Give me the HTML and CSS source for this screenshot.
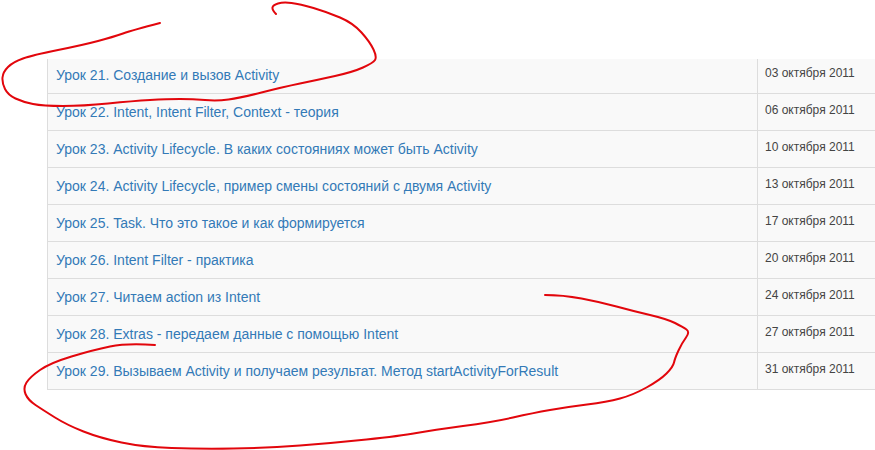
FILE: index.html
```html
<!DOCTYPE html>
<html lang="ru">
<head>
<meta charset="utf-8">
<title>Уроки</title>
<link rel="stylesheet" href="styles.css">
</head>
<body>
<main class="page">
  <div class="lessons">
    <div class="row"><a class="title" href="#">Урок 21. Создание и вызов Activity</a><span class="date">03 октября 2011</span></div>
    <div class="row"><a class="title" href="#">Урок 22. Intent, Intent Filter, Context - теория</a><span class="date">06 октября 2011</span></div>
    <div class="row"><a class="title" href="#">Урок 23. Activity Lifecycle. В каких состояниях может быть Activity</a><span class="date">10 октября 2011</span></div>
    <div class="row"><a class="title" href="#">Урок 24. Activity Lifecycle, пример смены состояний с двумя Activity</a><span class="date">13 октября 2011</span></div>
    <div class="row"><a class="title" href="#">Урок 25. Task. Что это такое и как формируется</a><span class="date">17 октября 2011</span></div>
    <div class="row"><a class="title" href="#">Урок 26. Intent Filter - практика</a><span class="date">20 октября 2011</span></div>
    <div class="row"><a class="title" href="#">Урок 27. Читаем action из Intent</a><span class="date">24 октября 2011</span></div>
    <div class="row"><a class="title" href="#">Урок 28. Extras - передаем данные с помощью Intent</a><span class="date">27 октября 2011</span></div>
    <div class="row"><a class="title" href="#">Урок 29. Вызываем Activity и получаем результат. Метод startActivityForResult</a><span class="date">31 октября 2011</span></div>
  </div>
  <svg class="ink" viewBox="0 0 875 450" aria-hidden="true">
    <path d="M160 23Q133 30 123 33.5Q113 37 98 41Q83 45 58 50Q33 55 23 58.5Q13 62 8 67Q3 72 2.5 77.5Q2 83 5 89Q8 95 15.5 98.5Q23 102 33 104Q43 106 63 106Q83 106 108 103.5Q133 101 150 100Q167 99 180 99Q193 99 205 100Q217 101 228.5 99.5Q240 98 261.5 92.5Q283 87 300 83.5Q317 80 335 76Q353 72 363 67.5Q373 63 375 60Q377 57 373.5 49.5Q370 42 361.5 32.5Q353 23 340 17.5Q327 12 313.5 8Q300 4 291.5 3Q283 2 278 3.5Q273 5 272.5 7.5Q272 10 276 14"/>
    <path d="M545 295Q563 295 581.5 298.5Q600 302 616.5 306.5Q633 311 650 315Q667 319 675 323Q683 327 686.5 329.5Q690 332 686 337.5Q682 343 678.5 350.5Q675 358 674 362.5Q673 367 666.5 373.5Q660 380 646.5 387.5Q633 395 620 398.5Q607 402 587 404.5Q567 407 550 410Q533 413 513 417.5Q493 422 463 426Q433 430 416.5 433Q400 436 366.5 439.5Q333 443 300 445.5Q267 448 233.5 448.5Q200 449 171.5 448Q143 447 121.5 442.5Q100 438 83.5 431.5Q67 425 55 417.5Q43 410 35.5 405Q28 400 25.5 394Q23 388 26.5 382.5Q30 377 40 370Q50 363 71.5 356.5Q93 350 110 346.5Q127 343 155 345"/>
  </svg>
</main>
</body>
</html>
```
FILE: styles.css
```css
html, body {
  margin: 0;
  padding: 0;
  background: #fff;
}

.page {
  position: relative;
  width: 875px;
  height: 450px;
  overflow: hidden;
  padding: 59px 0 0 47px;
  box-sizing: border-box;
  font-family: "Liberation Sans", Arial, sans-serif;
}

.lessons {
  width: 840px;
  border-left: 1px solid #ddd;
  border-bottom: 1px solid #ddd;
}

.row {
  display: grid;
  grid-template-columns: 710px 1fr;
  height: 37px;
  box-sizing: border-box;
  background: #f9f9f9;
  border-top: 1px solid #ddd;
}

.row:first-child {
  border-top: 0;
  height: 34px;
  padding-bottom: 2px;
}

.title {
  display: flex;
  align-items: center;
  padding-left: 8px;
  font-size: 14px;
  color: #337ab7;
  text-decoration: none;
  border-right: 1px solid #ddd;
}

.row:first-child .title {
  margin-bottom: -2px;
  padding-bottom: 2px;
}

.date {
  display: flex;
  align-items: center;
  padding: 0 0 4px 7px;
  font-size: 12px;
  color: #444;
}

.ink {
  position: absolute;
  inset: 0;
  width: 875px;
  height: 450px;
  fill: none;
  stroke: #e2060c;
  stroke-width: 2;
  stroke-linecap: round;
  stroke-linejoin: round;
  pointer-events: none;
}
```
